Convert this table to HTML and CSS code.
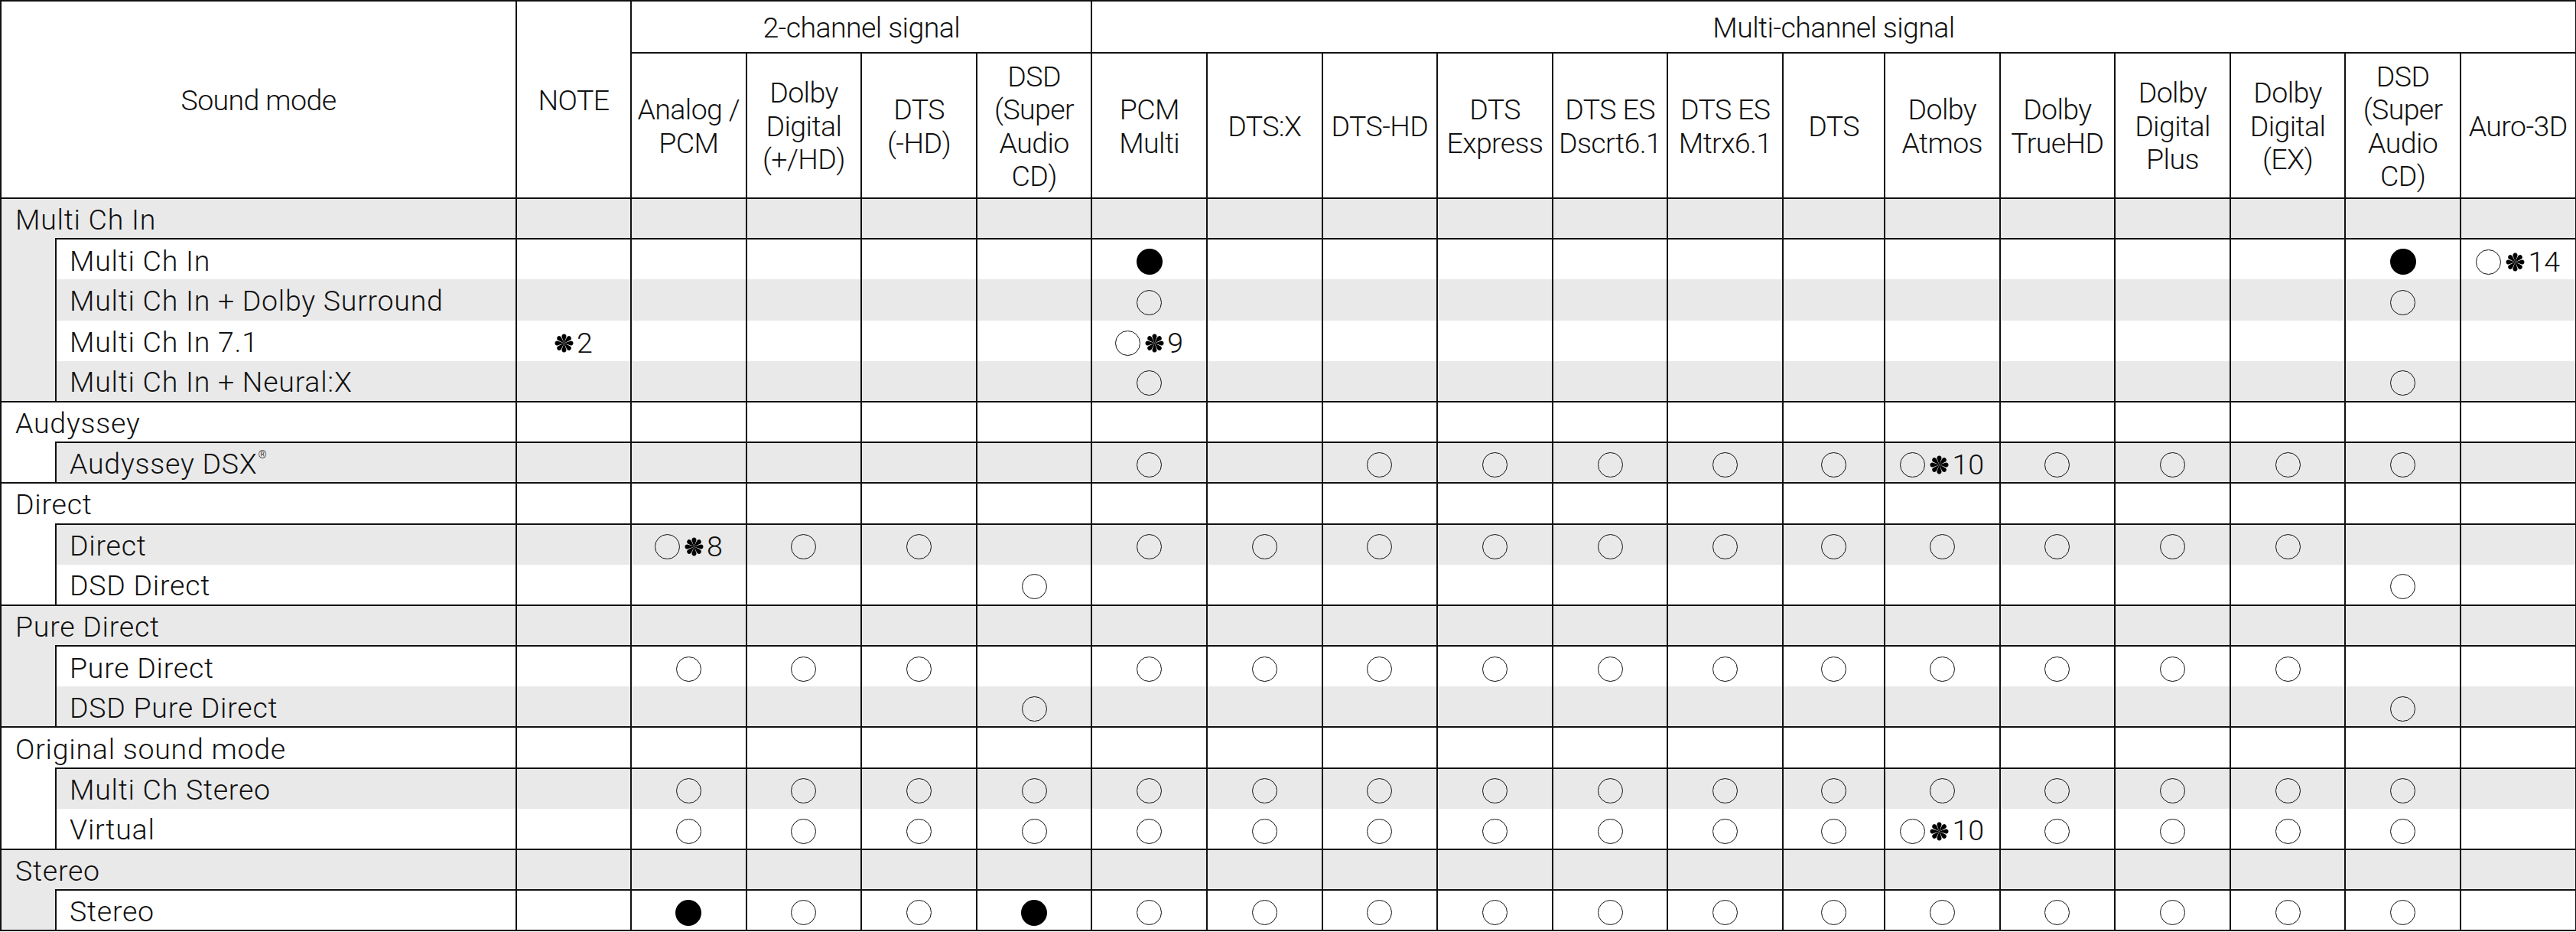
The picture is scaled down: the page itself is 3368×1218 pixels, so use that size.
FILE: index.html
```html
<!DOCTYPE html>
<html lang="en">
<head>
<meta charset="utf-8">
<title>Sound mode table</title>
<link rel="stylesheet" href="styles.css">
</head>
<body>
<svg class="defs" width="0" height="0" aria-hidden="true">
  <symbol id="ast" viewBox="0 0 24 24">
    <g>
      <path id="spoke" d="M12 12 L9.25 4.3 A2.9 2.9 0 1 1 14.75 4.3 Z"/>
      <use href="#spoke" transform="rotate(45 12 12)"/>
      <use href="#spoke" transform="rotate(90 12 12)"/>
      <use href="#spoke" transform="rotate(135 12 12)"/>
      <use href="#spoke" transform="rotate(180 12 12)"/>
      <use href="#spoke" transform="rotate(225 12 12)"/>
      <use href="#spoke" transform="rotate(270 12 12)"/>
      <use href="#spoke" transform="rotate(315 12 12)"/>
    </g>
  </symbol>
</svg>
<table class="modes">
  <colgroup>
    <col class="c-ind"><col class="c-lab"><col class="c-note">
    <col class="c-d"><col class="c-d"><col class="c-d"><col class="c-d">
    <col class="c-d"><col class="c-d"><col class="c-d"><col class="c-d"><col class="c-d"><col class="c-d">
    <col class="c-dts">
    <col class="c-d"><col class="c-d"><col class="c-d"><col class="c-d"><col class="c-d"><col class="c-d">
  </colgroup>
  <thead>
    <tr class="h1">
      <th colspan="2" rowspan="2">Sound mode</th>
      <th rowspan="2">NOTE</th>
      <th colspan="4">2-channel signal</th>
      <th colspan="13">Multi-channel signal</th>
    </tr>
    <tr class="h2">
      <th>Analog /<br>PCM</th>
      <th>Dolby<br>Digital<br>(+/HD)</th>
      <th>DTS<br>(-HD)</th>
      <th>DSD<br>(Super<br>Audio<br>CD)</th>
      <th>PCM<br>Multi</th>
      <th>DTS:X</th>
      <th>DTS-HD</th>
      <th>DTS<br>Express</th>
      <th>DTS ES<br>Dscrt6.1</th>
      <th>DTS ES<br>Mtrx6.1</th>
      <th>DTS</th>
      <th>Dolby<br>Atmos</th>
      <th>Dolby<br>TrueHD</th>
      <th>Dolby<br>Digital<br>Plus</th>
      <th>Dolby<br>Digital<br>(EX)</th>
      <th>DSD<br>(Super<br>Audio<br>CD)</th>
      <th>Auro-3D</th>
    </tr>
  </thead>
  <tbody>
    <!-- Multi Ch In -->
    <tr class="grp gr">
      <td colspan="2" class="glab">Multi Ch In</td>
      <td></td><td></td><td></td><td></td><td></td><td></td><td></td><td></td><td></td><td></td><td></td><td></td><td></td><td></td><td></td><td></td><td></td><td></td>
    </tr>
    <tr class="first wh">
      <td rowspan="4" class="ind gr"></td>
      <td class="lab">Multi Ch In</td>
      <td></td>
      <td></td><td></td><td></td><td></td>
      <td><span class="f"></span></td><td></td><td></td><td></td><td></td><td></td><td></td><td></td><td></td><td></td><td></td>
      <td><span class="f"></span></td>
      <td><span class="mk"><span class="o"></span><svg class="ast"><use href="#ast"/></svg>14</span></td>
    </tr>
    <tr class="gr">
      <td class="lab">Multi Ch In + Dolby Surround</td>
      <td></td>
      <td></td><td></td><td></td><td></td>
      <td><span class="o"></span></td><td></td><td></td><td></td><td></td><td></td><td></td><td></td><td></td><td></td><td></td>
      <td><span class="o"></span></td>
      <td></td>
    </tr>
    <tr class="wh">
      <td class="lab">Multi Ch In 7.1</td>
      <td><span class="mk"><svg class="ast"><use href="#ast"/></svg>2</span></td>
      <td></td><td></td><td></td><td></td>
      <td><span class="mk"><span class="o"></span><svg class="ast"><use href="#ast"/></svg>9</span></td><td></td><td></td><td></td><td></td><td></td><td></td><td></td><td></td><td></td><td></td>
      <td></td>
      <td></td>
    </tr>
    <tr class="gr">
      <td class="lab">Multi Ch In + Neural:X</td>
      <td></td>
      <td></td><td></td><td></td><td></td>
      <td><span class="o"></span></td><td></td><td></td><td></td><td></td><td></td><td></td><td></td><td></td><td></td><td></td>
      <td><span class="o"></span></td>
      <td></td>
    </tr>
    <!-- Audyssey -->
    <tr class="grp wh">
      <td colspan="2" class="glab">Audyssey</td>
      <td></td><td></td><td></td><td></td><td></td><td></td><td></td><td></td><td></td><td></td><td></td><td></td><td></td><td></td><td></td><td></td><td></td><td></td>
    </tr>
    <tr class="first gr">
      <td rowspan="1" class="ind wh"></td>
      <td class="lab">Audyssey DSX<sup>®</sup></td>
      <td></td>
      <td></td><td></td><td></td><td></td>
      <td><span class="o"></span></td><td></td><td><span class="o"></span></td><td><span class="o"></span></td><td><span class="o"></span></td><td><span class="o"></span></td><td><span class="o"></span></td>
      <td><span class="mk"><span class="o"></span><svg class="ast"><use href="#ast"/></svg>10</span></td>
      <td><span class="o"></span></td><td><span class="o"></span></td><td><span class="o"></span></td>
      <td><span class="o"></span></td>
      <td></td>
    </tr>
    <!-- Direct -->
    <tr class="grp wh">
      <td colspan="2" class="glab">Direct</td>
      <td></td><td></td><td></td><td></td><td></td><td></td><td></td><td></td><td></td><td></td><td></td><td></td><td></td><td></td><td></td><td></td><td></td><td></td>
    </tr>
    <tr class="first gr">
      <td rowspan="2" class="ind wh"></td>
      <td class="lab">Direct</td>
      <td></td>
      <td><span class="mk"><span class="o"></span><svg class="ast"><use href="#ast"/></svg>8</span></td><td><span class="o"></span></td><td><span class="o"></span></td><td></td>
      <td><span class="o"></span></td><td><span class="o"></span></td><td><span class="o"></span></td><td><span class="o"></span></td><td><span class="o"></span></td><td><span class="o"></span></td><td><span class="o"></span></td>
      <td><span class="o"></span></td><td><span class="o"></span></td><td><span class="o"></span></td><td><span class="o"></span></td>
      <td></td>
      <td></td>
    </tr>
    <tr class="wh">
      <td class="lab">DSD Direct</td>
      <td></td>
      <td></td><td></td><td></td><td><span class="o"></span></td>
      <td></td><td></td><td></td><td></td><td></td><td></td><td></td><td></td><td></td><td></td><td></td>
      <td><span class="o"></span></td>
      <td></td>
    </tr>
    <!-- Pure Direct -->
    <tr class="grp gr">
      <td colspan="2" class="glab">Pure Direct</td>
      <td></td><td></td><td></td><td></td><td></td><td></td><td></td><td></td><td></td><td></td><td></td><td></td><td></td><td></td><td></td><td></td><td></td><td></td>
    </tr>
    <tr class="first wh">
      <td rowspan="2" class="ind gr"></td>
      <td class="lab">Pure Direct</td>
      <td></td>
      <td><span class="o"></span></td><td><span class="o"></span></td><td><span class="o"></span></td><td></td>
      <td><span class="o"></span></td><td><span class="o"></span></td><td><span class="o"></span></td><td><span class="o"></span></td><td><span class="o"></span></td><td><span class="o"></span></td><td><span class="o"></span></td>
      <td><span class="o"></span></td><td><span class="o"></span></td><td><span class="o"></span></td><td><span class="o"></span></td>
      <td></td>
      <td></td>
    </tr>
    <tr class="gr">
      <td class="lab">DSD Pure Direct</td>
      <td></td>
      <td></td><td></td><td></td><td><span class="o"></span></td>
      <td></td><td></td><td></td><td></td><td></td><td></td><td></td><td></td><td></td><td></td><td></td>
      <td><span class="o"></span></td>
      <td></td>
    </tr>
    <!-- Original sound mode -->
    <tr class="grp wh">
      <td colspan="2" class="glab">Original sound mode</td>
      <td></td><td></td><td></td><td></td><td></td><td></td><td></td><td></td><td></td><td></td><td></td><td></td><td></td><td></td><td></td><td></td><td></td><td></td>
    </tr>
    <tr class="first gr">
      <td rowspan="2" class="ind wh"></td>
      <td class="lab">Multi Ch Stereo</td>
      <td></td>
      <td><span class="o"></span></td><td><span class="o"></span></td><td><span class="o"></span></td><td><span class="o"></span></td>
      <td><span class="o"></span></td><td><span class="o"></span></td><td><span class="o"></span></td><td><span class="o"></span></td><td><span class="o"></span></td><td><span class="o"></span></td><td><span class="o"></span></td>
      <td><span class="o"></span></td><td><span class="o"></span></td><td><span class="o"></span></td><td><span class="o"></span></td>
      <td><span class="o"></span></td>
      <td></td>
    </tr>
    <tr class="wh">
      <td class="lab">Virtual</td>
      <td></td>
      <td><span class="o"></span></td><td><span class="o"></span></td><td><span class="o"></span></td><td><span class="o"></span></td>
      <td><span class="o"></span></td><td><span class="o"></span></td><td><span class="o"></span></td><td><span class="o"></span></td><td><span class="o"></span></td><td><span class="o"></span></td><td><span class="o"></span></td>
      <td><span class="mk"><span class="o"></span><svg class="ast"><use href="#ast"/></svg>10</span></td>
      <td><span class="o"></span></td><td><span class="o"></span></td><td><span class="o"></span></td>
      <td><span class="o"></span></td>
      <td></td>
    </tr>
    <!-- Stereo -->
    <tr class="grp gr">
      <td colspan="2" class="glab">Stereo</td>
      <td></td><td></td><td></td><td></td><td></td><td></td><td></td><td></td><td></td><td></td><td></td><td></td><td></td><td></td><td></td><td></td><td></td><td></td>
    </tr>
    <tr class="first wh">
      <td rowspan="1" class="ind gr"></td>
      <td class="lab">Stereo</td>
      <td></td>
      <td><span class="f"></span></td><td><span class="o"></span></td><td><span class="o"></span></td><td><span class="f"></span></td>
      <td><span class="o"></span></td><td><span class="o"></span></td><td><span class="o"></span></td><td><span class="o"></span></td><td><span class="o"></span></td><td><span class="o"></span></td><td><span class="o"></span></td>
      <td><span class="o"></span></td><td><span class="o"></span></td><td><span class="o"></span></td><td><span class="o"></span></td>
      <td><span class="o"></span></td>
      <td></td>
    </tr>
  </tbody>
</table>
</body>
</html>
```

FILE: styles.css
```css
html, body {
  margin: 0;
  padding: 0;
  background: #ffffff;
}

body {
  font-family: Roboto, "Liberation Sans", Arial, sans-serif;
  font-weight: 300;
  font-size: 37.5px;
  color: #111111;
}

.defs {
  display: block;
  width: 0;
  height: 0;
  overflow: hidden;
}

.modes {
  border-collapse: collapse;
  table-layout: fixed;
  width: 3367px;
  border: 2px solid #111111;
}

.c-ind { width: 72px; }
.c-lab { width: 602px; }
.c-note { width: 150px; }
.c-d { width: 150.6px; }
.c-dts { width: 133px; }

.modes th,
.modes td {
  padding: 0;
  border-left: 2px solid #111111;
  border-right: 2px solid #111111;
  text-align: center;
  vertical-align: middle;
  font-weight: 300;
  white-space: nowrap;
}

.modes th {
  border: 2px solid #111111;
  line-height: 1.16;
  letter-spacing: -0.6px;
  padding-top: 3px;
  background: #ffffff;
}

.h1 { height: 68px; }
.h2 { height: 190px; }

.modes tbody tr { height: 53.2px; }

.grp td { border-top: 2px solid #111111; }
.first td { border-top: 2px solid #111111; }
.first td.ind { border-top: none; }

.gr td { background: #e9e9e9; }
.wh td { background: #ffffff; }
td.ind.gr { background: #e9e9e9; }
td.ind.wh { background: #ffffff; }

.glab,
.lab {
  text-align: left !important;
  letter-spacing: 0.75px;
  padding-top: 3px !important;
}

.glab { padding-left: 18px !important; }
.lab { padding-left: 17px !important; }

.lab sup {
  font-size: 14px;
  vertical-align: 20px;
  line-height: 0;
  margin-left: 1px;
}

.o, .f {
  display: inline-block;
  width: 33px;
  height: 33px;
  border-radius: 50%;
  box-sizing: border-box;
  vertical-align: middle;
}

.o { border: 1.5px solid #111111; }
.f { background: #000000; width: 34px; height: 34px; }

.mk {
  display: inline-flex;
  align-items: center;
  vertical-align: middle;
  line-height: 1;
}

.mk .o { margin-right: 6px; }

.ast {
  width: 25px;
  height: 25px;
  margin-right: 4px;
  fill: #000000;
}
```
